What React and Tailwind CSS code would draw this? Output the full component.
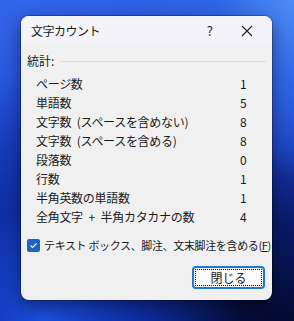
import React from 'react';

const stats = [
    ['ページ数', '1'],
    ['単語数', '5'],
    ['文字数\u2002(スペースを含めない)', '8'],
    ['文字数\u2002(スペースを含める)', '8'],
    ['段落数', '0'],
    ['行数', '1'],
    ['半角英数の単語数', '1'],
    ['全角文字\u2002+\u2002半角カタカナの数', '4'],
];

const font = { fontFamily: '"Noto Sans CJK JP", "Noto Sans", sans-serif' };

export default function App() {
    return (
        <div
            className="w-[294px] h-[321px] overflow-hidden pt-[16px] pl-[21px] bg-[radial-gradient(ellipse_at_100%_0%,#4c8cf5_0%,#2f66e6_18%,transparent_40%),radial-gradient(ellipse_at_15%_100%,#1a4fe0_0%,#0f2fa8_25%,transparent_55%),linear-gradient(165deg,#3466ea_0%,#2450d8_30%,#1636b0_55%,#0a1a6a_75%,#030a30_100%)]"
            style={font}
        >
            {/* Dialog */}
            <div className="w-[251px] h-[284px] rounded-[8px] overflow-hidden bg-[#f0f0f0] shadow-[0_0_0_1px_rgba(0,0,0,0.25),0_6px_18px_rgba(0,0,0,0.45)] flex flex-col text-[12px] text-[#1a1a1a]">
                {/* Title bar */}
                <div className="h-[29px] bg-[#f3f3f8] flex items-center pl-[10px]">
                    <span className="text-[12px] text-[#1a1a1a] tracking-[-0.5px]">文字カウント</span>
                    <span className="ml-auto mr-[28px] text-[13px] text-[#222]">?</span>
                    <svg width="12" height="12" viewBox="0 0 12 12" className="mr-[19px]">
                        <path d="M1 1L11 11M11 1L1 11" stroke="#222" strokeWidth="1.1" />
                    </svg>
                </div>

                {/* Body */}
                <div className="flex-1 flex flex-col px-[6px] pt-[7px]">
                    <div className="flex items-center h-[18px]">
                        <span>統計:</span>
                        <div className="flex-1 h-px bg-[#dadada] ml-[6px]"></div>
                    </div>

                    <div className="flex flex-col mt-[4px] pl-[9px]">
                        {stats.map(([label, value]) => (
                            <div key={label} className="flex items-center h-[19px]">
                                <span className="w-[204px] tracking-[-0.3px] whitespace-pre">{label}</span>
                                <span>{value}</span>
                            </div>
                        ))}
                    </div>

                    <div className="flex items-center mt-[11px] h-[16px]">
                        <div className="w-[13px] h-[13px] rounded-[2px] bg-[#1f64c0] flex items-center justify-center shrink-0">
                            <svg width="9" height="9" viewBox="0 0 9 9">
                                <path d="M1.5 4.6L3.5 6.5L7.6 2.3" fill="none" stroke="#fff" strokeWidth="1.1" />
                            </svg>
                        </div>
                        <span className="ml-[4px] text-[11px] tracking-[-0.35px] whitespace-nowrap">
                            テキスト ボックス、脚注、文末脚注を含める(<span className="underline">F</span>)
                        </span>
                    </div>

                    <div className="flex justify-end mt-[13px] pr-[1px]">
                        <button className="w-[73px] h-[23px] rounded-[4px] border-2 border-[#1f78d6] bg-[#fdfdfd] p-[1px]">
                            <div className="w-full h-full border border-dotted border-[#111] flex items-center justify-center text-[12px]">
                                閉じる
                            </div>
                        </button>
                    </div>
                </div>
            </div>
        </div>
    );
}
